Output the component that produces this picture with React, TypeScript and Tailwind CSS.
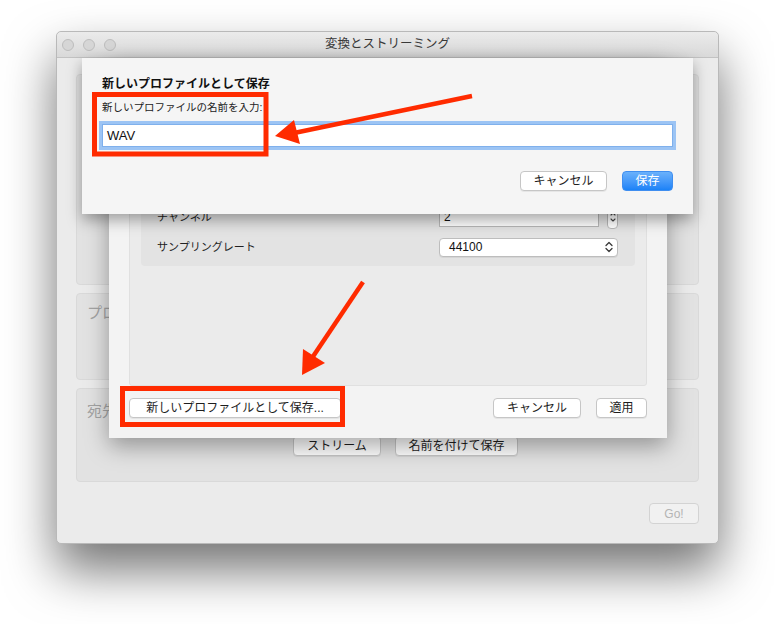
import { ReactNode } from 'react'

const FONT = { fontFamily: '"Liberation Sans", "Noto Sans CJK JP", sans-serif' }

function Btn({ children, className = '', primary = false }: { children: ReactNode; className?: string; primary?: boolean }) {
  return (
    <div
      className={`flex items-center justify-center h-[20px] rounded-[4px] text-[12px] leading-none ${
        primary
          ? 'bg-gradient-to-b from-[#6ab1fb] to-[#1a82f7] border border-[#3f8ef0] text-white'
          : 'bg-white border border-[#c6c6c6] text-[#1e1e1e] shadow-[0_1px_0_rgba(0,0,0,0.06)]'
      } ${className}`}
    >
      {children}
    </div>
  )
}

function UpDown() {
  return (
    <svg width="8" height="12" viewBox="0 0 8 12" fill="none" stroke="#3a3a3a" strokeWidth="1.3" strokeLinecap="round" strokeLinejoin="round">
      <path d="M1 4.5 L4 1.5 L7 4.5" />
      <path d="M1 7.5 L4 10.5 L7 7.5" />
    </svg>
  )
}

function Annotations() {
  return (
    <svg className="absolute inset-0 pointer-events-none" width="775" height="624" viewBox="0 0 775 624">
      <g fill="none" stroke="#ff2b00" strokeWidth="5">
        <rect x="94.5" y="94.5" width="171.5" height="59.5" />
        <rect x="122.5" y="388.5" width="220" height="36" />
      </g>
      <g stroke="#ff2b00" strokeWidth="4.5" strokeLinecap="butt">
        <line x1="472" y1="96" x2="294" y2="133" />
        <line x1="363" y1="282" x2="312" y2="358" />
      </g>
      <g fill="#ff2b00">
        <polygon points="275,136 294,120 300,144" />
        <polygon points="302,375 303,349 325,363" />
      </g>
    </svg>
  )
}

export default function App() {
  return (
    <div className="relative w-[775px] h-[624px] bg-white overflow-hidden pl-[56px] pt-[31px]" style={FONT}>
      {/* main window */}
      <div className="relative w-[663px] h-[513px] rounded-[5px] bg-[#ebebeb] border border-[#b9b9b9] shadow-[0_26px_50px_rgba(0,0,0,0.55)]">
        {/* title bar */}
        <div className="flex items-center h-[26px] rounded-t-[5px] bg-gradient-to-b from-[#ebebeb] to-[#d9d9d9] border-b border-[#c2c2c2]">
          <div className="flex items-center gap-[9px] pl-[5px] w-[60px]">
            <span className="w-[12px] h-[12px] rounded-full bg-[#d6d6d6] border border-[#bdbdbd]" />
            <span className="w-[12px] h-[12px] rounded-full bg-[#d6d6d6] border border-[#bdbdbd]" />
            <span className="w-[12px] h-[12px] rounded-full bg-[#d6d6d6] border border-[#bdbdbd]" />
          </div>
          <div className="flex-1 text-center text-[12.5px] text-[#3a3a3a]">変換とストリーミング</div>
          <div className="w-[60px]" />
        </div>

        {/* window content */}
        <div className="flex flex-col px-[19px] pt-[16px]">
          <div className="h-[211px] rounded-[4px] bg-[#e2e2e2] border border-[#d9d9d9]" />
          <div className="h-[87px] mt-[8px] rounded-[4px] bg-[#e2e2e2] border border-[#d9d9d9] px-[10px] pt-[10px]">
            <div className="text-[15px] leading-[18px] text-[#a3a3a3]">プロファイル</div>
          </div>
          <div className="h-[94px] mt-[8px] rounded-[4px] bg-[#e2e2e2] border border-[#d9d9d9] px-[10px] pt-[13px]">
            <div className="text-[15px] leading-[18px] text-[#a3a3a3]">宛先</div>
            <div className="flex gap-[14px] mt-[16px] pl-[206px]">
              <Btn className="w-[88px]">ストリーム</Btn>
              <Btn className="w-[123px]">名前を付けて保存</Btn>
            </div>
          </div>
          <div className="flex justify-end mt-[21px]">
            <div className="flex items-center justify-center w-[50px] h-[21px] rounded-[4px] bg-[#f1f1f1] border border-[#d3d3d3] text-[12px] text-[#b4b4b4]">
              Go!
            </div>
          </div>
        </div>

        {/* conversion profile sheet */}
        <div className="absolute left-[52px] top-[26px] w-[558px] h-[380px] flex flex-col p-[20px] bg-[#f3f3f3] shadow-[0_8px_22px_rgba(0,0,0,0.35)]">
          <div className="flex-1 flex flex-col justify-end rounded-[3px] bg-[#ebebeb] border border-[#e0e0e0] px-[11px] pb-[119px]">
            <div className="flex flex-col gap-[10px] h-[176px] justify-end rounded-[4px] bg-[#e3e3e3] pl-[16px] pb-[9px]">
              <div className="flex items-center h-[20px]">
                <span className="w-[282px] text-[11px] text-[#222]">チャンネル</span>
                <div className="flex items-center w-[160px] h-[20px] bg-white border border-[#b8b8b8] pl-[4px] text-[12px] text-[#111]">
                  2
                </div>
                <div className="ml-[8px] flex items-center justify-center w-[11px] h-[24px] rounded-[4px] bg-white border border-[#b8b8b8]">
                  <svg width="6" height="14" viewBox="0 0 6 14" fill="none" stroke="#444" strokeWidth="1.1" strokeLinecap="round" strokeLinejoin="round">
                    <path d="M1 5 L3 3 L5 5" />
                    <path d="M1 9 L3 11 L5 9" />
                  </svg>
                </div>
              </div>
              <div className="flex items-center h-[20px]">
                <span className="w-[282px] text-[11px] text-[#222]">サンプリングレート</span>
                <div className="flex items-center justify-between w-[179px] h-[19px] rounded-[4px] bg-white border border-[#bdbdbd] shadow-[0_1px_0_rgba(0,0,0,0.06)] pl-[9px] pr-[4px] text-[12px] text-[#111]">
                  <span>44100</span>
                  <UpDown />
                </div>
              </div>
            </div>
          </div>
          <div className="flex items-center mt-[12px]">
            <Btn className="w-[212px]">新しいプロファイルとして保存...</Btn>
            <div className="flex-1" />
            <Btn className="w-[88px]">キャンセル</Btn>
            <Btn className="w-[51px] ml-[15px]">適用</Btn>
          </div>
        </div>

        {/* new profile name sheet */}
        <div className="absolute left-[25px] top-[26px] w-[611px] h-[156px] flex flex-col px-[20px] pt-[18px] bg-[#f5f5f5] shadow-[0_6px_14px_rgba(0,0,0,0.35)]">
          <div className="text-[12px] leading-[16px] font-bold text-[#111]">新しいプロファイルとして保存</div>
          <div className="mt-[8px] text-[10.5px] leading-[14px] text-[#222]">新しいプロファイルの名前を入力:</div>
          <div className="mt-[10px] flex items-center h-[23px] bg-white border border-[#7fb0ec] shadow-[0_0_0_3px_#9cc4f4] pl-[4px] text-[13px] text-[#111]">
            WAV
          </div>
          <div className="flex justify-end gap-[15px] mt-[24px]">
            <Btn className="w-[87px]">キャンセル</Btn>
            <Btn primary className="w-[51px]">保存</Btn>
          </div>
        </div>
      </div>

      <Annotations />
    </div>
  )
}
